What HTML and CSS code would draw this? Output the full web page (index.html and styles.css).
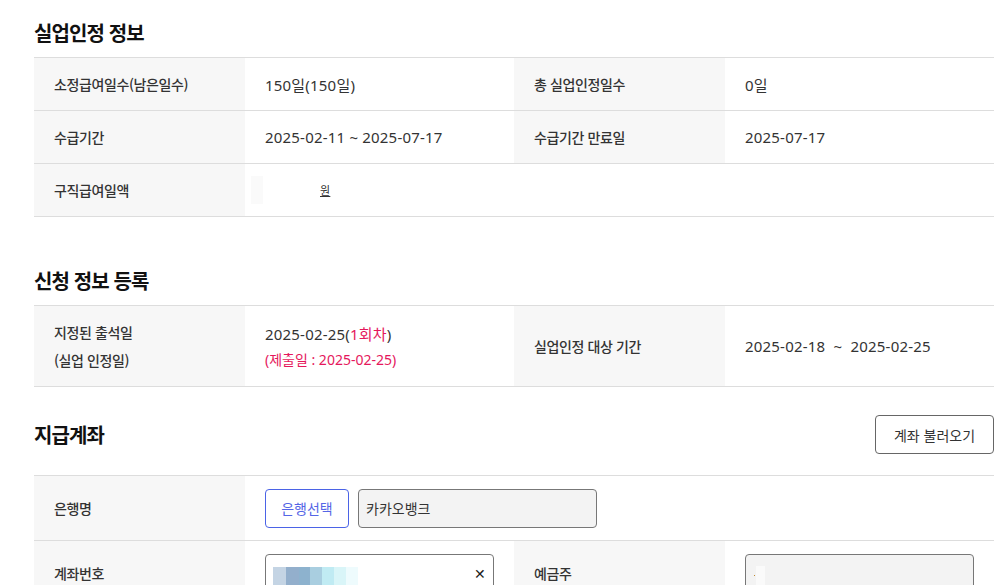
FILE: index.html
```html
<!DOCTYPE html>
<html lang="ko">
<head>
    <meta charset="UTF-8">
    <title>실업인정 신청</title>
    <link rel="stylesheet" href="styles.css">
</head>
<body>
    <div class="content">
        <h2 class="section-title">실업인정 정보</h2>
        <table class="info-table">
            <colgroup>
                <col class="col-th"><col class="col-td"><col class="col-th"><col class="col-td">
            </colgroup>
            <tr>
                <th>소정급여일수(남은일수)</th>
                <td>150일(150일)</td>
                <th>총 실업인정일수</th>
                <td>0일</td>
            </tr>
            <tr>
                <th>수급기간</th>
                <td>2025-02-11 ~ 2025-07-17</td>
                <th>수급기간 만료일</th>
                <td>2025-07-17</td>
            </tr>
            <tr>
                <th>구직급여일액</th>
                <td colspan="3"><span class="masked"></span><span class="won">원</span></td>
            </tr>
        </table>

        <h2 class="section-title gap-top">신청 정보 등록</h2>
        <table class="info-table">
            <colgroup>
                <col class="col-th"><col class="col-td"><col class="col-th"><col class="col-td">
            </colgroup>
            <tr class="tall">
                <th>지정된 출석일<br>(실업 인정일)</th>
                <td>
                    <div>2025-02-25(<span class="pink">1회차</span>)</div>
                    <div class="submit-date">(제출일 : 2025-02-25)</div>
                </td>
                <th>실업인정 대상 기간</th>
                <td>2025-02-18 &nbsp;~ &nbsp;2025-02-25</td>
            </tr>
        </table>

        <div class="section-head">
            <h2 class="section-title">지급계좌</h2>
            <button class="btn-outline">계좌 불러오기</button>
        </div>
        <table class="info-table form-table">
            <colgroup>
                <col class="col-th"><col class="col-td"><col class="col-th"><col class="col-td">
            </colgroup>
            <tr>
                <th>은행명</th>
                <td colspan="3">
                    <div class="bank-row">
                        <button class="btn-bank">은행선택</button>
                        <div class="input readonly bank-name">카카오뱅크</div>
                    </div>
                </td>
            </tr>
            <tr>
                <th>계좌번호</th>
                <td>
                    <div class="input account">
                        <div class="pixels">
                            <span class="p1"></span><span class="p2"></span><span class="p3"></span><span class="p4"></span><span class="p5"></span><span class="p6"></span><span class="p7"></span>
                        </div>
                        <span class="clear">&#x2715;</span>
                    </div>
                </td>
                <th>예금주</th>
                <td>
                    <div class="input readonly holder"><span class="holder-dot"></span><span class="holder-mask"></span></div>
                </td>
            </tr>
        </table>
    </div>
</body>
</html>
```

FILE: styles.css
```css
body {
    margin: 0;
    font-family: 'Noto Sans CJK KR', 'Noto Sans', sans-serif;
    color: #333333;
    background: #FFFFFF;
}
.content {
    width: 960px;
    padding-left: 34px;
}
.section-title {
    margin: 19px 0 10px;
    font-size: 20px;
    line-height: 28px;
    font-weight: 700;
    letter-spacing: -0.9px;
    color: #111111;
}
.section-title.gap-top {
    margin-top: 50px;
}
.info-table {
    width: 960px;
    table-layout: fixed;
    border-collapse: collapse;
    border-top: 1px solid #dddddd;
    font-size: 14px;
}
.col-th { width: 211px; }
.col-td { width: 269px; }
.info-table tr {
    height: 53px;
    border-bottom: 1px solid #dddddd;
}
.info-table th {
    background: #f7f7f7;
    text-align: left;
    font-weight: 500;
    letter-spacing: -0.4px;
    padding: 0 20px;
    color: #333333;
}
.info-table td {
    padding: 0 20px;
    font-family: 'Noto Sans', 'Noto Sans CJK KR', sans-serif;
    font-size: 15px;
    letter-spacing: 0.2px;
    color: #333333;
}
.info-table tr.tall {
    height: 81px;
}
.info-table tr.tall th {
    line-height: 28px;
}
.pink {
    color: #e5175c;
}
.submit-date {
    margin-top: 5px;
    font-size: 14px;
    letter-spacing: 0;
    color: #e5175c;
}
.masked {
    display: inline-block;
    width: 12px;
    height: 28px;
    margin-left: -14px;
    margin-right: 57px;
    background: #fafafa;
    vertical-align: middle;
}
.won {
    font-family: 'Noto Sans CJK KR', sans-serif;
    font-size: 11px;
    text-decoration: underline;
    vertical-align: middle;
}
.section-head {
    display: flex;
    justify-content: space-between;
    align-items: center;
    width: 960px;
    margin-top: 28px;
    margin-bottom: 21px;
}
.section-head .section-title {
    margin: 0;
}
.btn-outline {
    width: 119px;
    height: 39px;
    background: #FFFFFF;
    border: 1px solid #666666;
    border-radius: 4px;
    font-family: 'Noto Sans CJK KR', sans-serif;
    font-size: 14px;
    color: #333333;
}
.form-table tr {
    height: 65px;
}
.bank-row {
    display: flex;
    gap: 9px;
}
.btn-bank {
    width: 84px;
    height: 39px;
    background: #FFFFFF;
    border: 1px solid #4b63e6;
    border-radius: 4px;
    font-family: 'Noto Sans CJK KR', sans-serif;
    font-size: 14px;
    color: #5566e6;
}
.input {
    box-sizing: border-box;
    height: 39px;
    border: 1px solid #777777;
    border-radius: 4px;
    display: flex;
    align-items: center;
    padding: 0 7px;
    font-family: 'Noto Sans CJK KR', sans-serif;
    font-size: 14px;
    letter-spacing: 0;
}
.input.readonly {
    background: #f3f3f3;
    color: #333333;
}
.bank-name {
    width: 239px;
}
.account {
    width: 229px;
    justify-content: space-between;
}
.pixels {
    display: flex;
    height: 22px;
    margin-top: 12px;
    align-self: flex-start;
}
.pixels span {
    width: 12px;
}
.pixels .p1 { background: #c4d4e4; width: 13px; }
.pixels .p2 { background: #93afcc; width: 13px; }
.pixels .p3 { background: #8db2ce; width: 11px; }
.pixels .p4 { background: #a9cee0; }
.pixels .p5 { background: #c0ebf3; }
.pixels .p6 { background: #d9f5f8; }
.pixels .p7 { background: #eefbfd; }
.clear {
    font-size: 14px;
    color: #222222;
}
.holder {
    width: 229px;
    padding-left: 8px;
}
.holder-dot {
    width: 1px;
    height: 1px;
    margin-top: 4px;
    background: #c08a30;
}
.holder-mask {
    width: 9px;
    height: 22px;
    margin-left: 1px;
    margin-top: 8px;
    background: #fafafa;
}
```
